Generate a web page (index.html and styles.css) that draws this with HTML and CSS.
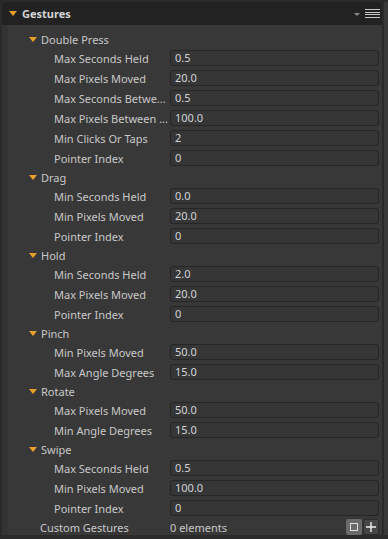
FILE: index.html
```html
<!DOCTYPE html>
<html lang="en">
<head>
  <meta charset="UTF-8">
  <title>Gestures</title>
  <link rel="stylesheet" href="styles.css">
</head>
<body>
  <div class="window">
    <div class="panel">
      <div class="header">
        <span class="arrow"></span>
        <span class="header-title">Gestures</span>
        <span class="header-tools">
          <span class="menu-arrow"></span>
          <span class="burger"><i></i><i></i><i></i><i></i></span>
        </span>
      </div>
      <div class="body">
        <div class="foldout"><span class="arrow"></span>Double Press</div>
        <div class="field"><span class="label">Max Seconds Held</span><span class="input">0.5</span></div>
        <div class="field"><span class="label">Max Pixels Moved</span><span class="input">20.0</span></div>
        <div class="field"><span class="label">Max Seconds Betwe...</span><span class="input">0.5</span></div>
        <div class="field"><span class="label">Max Pixels Between ...</span><span class="input">100.0</span></div>
        <div class="field"><span class="label">Min Clicks Or Taps</span><span class="input">2</span></div>
        <div class="field"><span class="label">Pointer Index</span><span class="input">0</span></div>

        <div class="foldout"><span class="arrow"></span>Drag</div>
        <div class="field"><span class="label">Min Seconds Held</span><span class="input">0.0</span></div>
        <div class="field"><span class="label">Min Pixels Moved</span><span class="input">20.0</span></div>
        <div class="field"><span class="label">Pointer Index</span><span class="input">0</span></div>

        <div class="foldout"><span class="arrow"></span>Hold</div>
        <div class="field"><span class="label">Min Seconds Held</span><span class="input">2.0</span></div>
        <div class="field"><span class="label">Max Pixels Moved</span><span class="input">20.0</span></div>
        <div class="field"><span class="label">Pointer Index</span><span class="input">0</span></div>

        <div class="foldout"><span class="arrow"></span>Pinch</div>
        <div class="field"><span class="label">Min Pixels Moved</span><span class="input">50.0</span></div>
        <div class="field"><span class="label">Max Angle Degrees</span><span class="input">15.0</span></div>

        <div class="foldout"><span class="arrow"></span>Rotate</div>
        <div class="field"><span class="label">Max Pixels Moved</span><span class="input">50.0</span></div>
        <div class="field"><span class="label">Min Angle Degrees</span><span class="input">15.0</span></div>

        <div class="foldout"><span class="arrow"></span>Swipe</div>
        <div class="field"><span class="label">Max Seconds Held</span><span class="input">0.5</span></div>
        <div class="field"><span class="label">Min Pixels Moved</span><span class="input">100.0</span></div>
        <div class="field"><span class="label">Pointer Index</span><span class="input">0</span></div>

        <div class="custom">
          <span class="custom-label">Custom Gestures</span>
          <span class="custom-value">0 elements</span>
          <span class="buttons">
            <span class="btn btn-remove"><i></i></span>
            <span class="btn btn-add">
              <svg width="10" height="10" viewBox="0 0 10 10"><path d="M5 0v10M0 5h10" stroke="#eee" stroke-width="1.4"/></svg>
            </span>
          </span>
        </div>
      </div>
    </div>
    <div class="scrollbar"></div>
  </div>
</body>
</html>
```

FILE: styles.css
```css
html, body {
  margin: 0;
  height: 100%;
  background: #2a2a2a;
  font-family: "Noto Sans", "Open Sans", sans-serif;
  font-size: 11px;
  color: #c8c8c8;
}
.window {
  display: flex;
  height: 539px;
  box-sizing: border-box;
  padding: 2px 0 4px 2px;
}
.panel {
  flex: 1;
  display: flex;
  flex-direction: column;
  border-radius: 3px 3px 0 0;
  overflow: hidden;
}
.scrollbar {
  width: 4px;
  margin-left: 2px;
  background: #383838;
}
.header {
  height: 23px;
  flex: none;
  display: flex;
  align-items: center;
  background: #222;
  padding-left: 7px;
}
.header-title {
  font-weight: bold;
  color: #d4d4d4;
  margin-left: 5px;
}
.arrow {
  width: 0;
  height: 0;
  border-left: 4px solid transparent;
  border-right: 4px solid transparent;
  border-top: 5px solid #e9a02a;
  display: inline-block;
}
.header-tools {
  margin-left: auto;
  display: flex;
  align-items: center;
  margin-right: 2px;
}
.menu-arrow {
  width: 0;
  height: 0;
  border-left: 3px solid transparent;
  border-right: 3px solid transparent;
  border-top: 3px solid #8a8a8a;
  margin-right: 5px;
  margin-top: 2px;
}
.burger {
  display: flex;
  flex-direction: column;
  gap: 1.5px;
  width: 15px;
}
.burger i {
  height: 1px;
  background: #c8c8c8;
}
.body {
  flex: 1;
  background: #383838;
  border-left: 6px solid #333;
  padding: 5px 3px 0 0;
}
.foldout {
  height: 18px;
  display: flex;
  align-items: center;
  padding-left: 21px;
}
.foldout .arrow {
  margin-right: 4px;
}
.field {
  height: 20px;
  display: flex;
  align-items: center;
  padding-left: 46px;
}
.label {
  width: 116px;
  flex: none;
  white-space: nowrap;
}
.input {
  flex: 1;
  height: 16px;
  box-sizing: border-box;
  border: 1px solid #262626;
  border-radius: 3px;
  background: #363636;
  padding-left: 4px;
  line-height: 14px;
  color: #d0d4d8;
}
.custom {
  height: 18px;
  display: flex;
  align-items: center;
  padding-left: 32px;
}
.custom-label {
  width: 130px;
}
.buttons {
  margin-left: auto;
  display: flex;
  gap: 1px;
}
.btn {
  width: 16px;
  height: 16px;
  box-sizing: border-box;
  display: flex;
  align-items: center;
  justify-content: center;
  border-radius: 2px;
}
.btn-remove {
  background: #6a6a6a;
}
.btn-remove i {
  width: 6px;
  height: 6px;
  border: 1px solid #e0e0e0;
}
.btn-add {
  background: #464646;
  border: 1px solid #2c2c2c;
}
```
